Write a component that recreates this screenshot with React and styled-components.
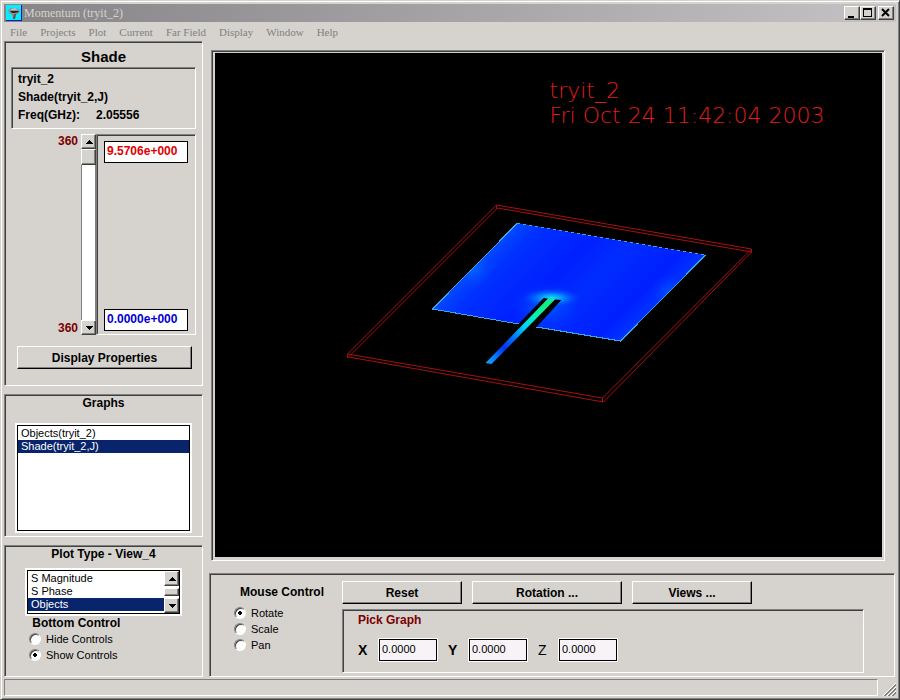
import { useState } from 'react';
import styled, { createGlobalStyle, css } from 'styled-components';

const GlobalStyle = createGlobalStyle`
  * {
    box-sizing: border-box;
  }

  body {
    margin: 0;
    background: #d6d3ce;
    color: #000;
    font: 12px/16px 'Liberation Sans', Arial, sans-serif;
  }

  button, input, select {
    font: inherit;
    color: inherit;
    margin: 0;
    border-radius: 0;
    outline: none;
  }
`;

const sunken = css`
  border: 1px solid;
  border-color: #808080 #fff #fff #808080;
  box-shadow: inset 1px 1px 0 #404040;
`;

const raised = css`
  border: 1px solid;
  border-color: #fff #404040 #404040 #fff;
  box-shadow: inset -1px -1px 0 #808080;
  background: #d6d3ce;
`;

const Window = styled.div`
  min-height: 100vh;
  display: flex;
  flex-direction: column;
  padding: 3px;
  border: 1px solid;
  border-color: #d6d3ce #404040 #404040 #d6d3ce;
  box-shadow: inset 1px 1px 0 #fff, inset -1px -1px 0 #808080;
`;

const TitleBar = styled.header`
  display: flex;
  align-items: center;
  height: 18px;
  padding: 0 2px;
  background: linear-gradient(90deg, #868486, #c4c2c4);
  color: #d6d3ce;
  font: 12px/16px 'Liberation Serif', 'Times New Roman', serif;
`;

const Title = styled.h1`
  flex: 1;
  margin: 0 0 0 2px;
  font: inherit;
`;

const WindowButtons = styled.div`
  display: flex;
`;

const WindowButton = styled.button`
  ${raised}
  width: 16px;
  height: 14px;
  padding: 0;
  display: flex;
  color: #000;

  &:last-child {
    margin-left: 2px;
  }
`;

const Menu = styled.nav`
  display: flex;
  gap: 11px;
  height: 19px;
  padding: 0 5px;
`;

const MenuButton = styled.button`
  border: 0;
  padding: 0 1px;
  background: none;
  color: #808080;
  font: 11px/20px 'Liberation Serif', 'Times New Roman', serif;
`;

const Workspace = styled.main`
  flex: 1;
  display: flex;
  gap: 6px;
`;

const Sidebar = styled.div`
  width: 199px;
  display: flex;
  flex-direction: column;
  gap: 8px;
`;

const Panel = styled.section`
  ${sunken}
  flex: ${(props) => (props.$grow ? 1 : 'none')};
  display: flex;
  flex-direction: column;
`;

const Heading = styled.h2`
  margin: 0;
  text-align: ${(props) => (props.$left ? 'left' : 'center')};
  font-size: ${(props) => (props.$large ? 15 : 12)}px;
  font-weight: 700;
  line-height: 16px;
  color: ${(props) => props.$color || '#000'};
`;

const ShadePanel = styled(Panel)`
  padding: 7px 6px 16px;
`;

const Info = styled.div`
  ${sunken}
  margin-top: 2px;
  padding: 2px 6px 4px;
  font-weight: 700;
  line-height: 18px;
`;

const Frequency = styled.div`
  display: flex;
  gap: 16px;
`;

const Scale = styled.div`
  display: flex;
  height: 201px;
  margin-top: 5px;
`;

const ScaleLabels = styled.div`
  width: 70px;
  padding-right: 3px;
  display: flex;
  flex-direction: column;
  justify-content: space-between;
  text-align: right;
  font-weight: 700;
  line-height: 14px;
  color: #7b0000;
`;

const ScrollBar = styled.div`
  width: 15px;
  display: flex;
  flex-direction: column;
  background: #fff;
`;

const ArrowButton = styled.button`
  ${raised}
  height: 15px;
  padding: 0;
  display: flex;
  align-items: center;
  justify-content: center;
`;

const Slider = styled.input`
  appearance: none;
  writing-mode: vertical-lr;
  flex: 1;
  width: 15px;
  min-height: 0;
  background: #fff;
  border: 1px solid #808080;
  border-width: 0 1px;

  &::-webkit-slider-thumb {
    appearance: none;
    ${raised}
    width: 15px;
    height: 16px;
  }
`;

const ScaleFrame = styled.div`
  ${sunken}
  flex: 1;
  padding: 6px 7px 3px;
  display: flex;
  flex-direction: column;
  justify-content: space-between;
`;

const ScaleValue = styled.input`
  width: 100%;
  height: 22px;
  padding: 0 2px 3px;
  border: 1px solid #000;
  background: #fff;
  font-weight: 700;
  color: ${(props) => props.$color};
`;

const PushButton = styled.button`
  border: 1px solid;
  border-color: #fff #000 #000 #fff;
  box-shadow: inset -1px -1px 0 #808080;
  background: #d6d3ce;
  height: 23px;
  padding: 0;
  font-weight: 700;
  width: ${(props) => (props.$width ? props.$width + 'px' : 'auto')};
`;

const PropertiesButton = styled(PushButton)`
  margin: 11px 4px 0 6px;
`;

const ListFrame = styled.div`
  display: flex;
  border: 1px solid #000;
  outline: 2px solid #fff;
  background: #fff;
`;

const List = styled.select`
  flex: 1;
  min-width: 0;
  height: 100%;
  padding: 1px 0 0;
  border: 0;
  background: #fff;
  overflow: hidden;

  option {
    min-height: 13px;
    padding: 0 3px;
    font-size: 11px;
    line-height: 13px;
  }

  option:checked {
    background-image: linear-gradient(#08246b, #08246b);
    -webkit-text-fill-color: #fff;
  }
`;

const GraphsFrame = styled(ListFrame)`
  flex: 1;
  margin: 14px 12px 5px;
`;

const TypesFrame = styled(ListFrame)`
  height: 44px;
  margin: 8px 22px 0;
`;

const TypesScroll = styled(ScrollBar)`
  justify-content: space-between;
`;

const Thumb = styled.div`
  ${raised}
  height: 8px;
`;

const PlotTypePanel = styled(Panel)`
  height: 132px;
`;

const BottomControl = styled.div`
  padding: 1px 24px;
`;

const Radio = styled.label`
  display: flex;
  align-items: center;
  gap: 5px;
  height: 16px;
  font-size: 11px;
`;

const RadioInput = styled.input`
  appearance: none;
  width: 12px;
  height: 12px;
  border: 1px solid;
  border-color: #808080 #fff #fff #808080;
  border-radius: 50%;
  box-shadow: inset 1px 1px 0 #404040;
  background: #fff;

  &:checked {
    background: radial-gradient(circle, #000 2px, #fff 2px);
  }
`;

const Content = styled.div`
  flex: 1;
  min-width: 0;
  display: flex;
  flex-direction: column;
  gap: 12px;
`;

const Viewport = styled.section`
  ${sunken}
  flex: 1;
  display: flex;
  margin: 9px 11px 0 2px;
  padding: 2px 2px 2px 3px;
`;

const Plot = styled.svg`
  flex: 1;
  min-width: 0;
  height: 504px;
  background: #000;
`;

const PlotText = styled.text`
  font: 200 22px 'DejaVu Sans', sans-serif;
  fill: #e01c1c;
`;

const Controls = styled.section`
  ${sunken}
  display: flex;
  margin-right: 1px;
  padding: 7px 30px 3px 24px;
`;

const MouseControl = styled.div`
  width: 108px;
  padding-top: 3px;
`;

const MouseHeading = styled(Heading)`
  padding: 0 0 5px 6px;
`;

const Actions = styled.div`
  flex: 1;
`;

const ButtonRow = styled.div`
  display: flex;
  gap: 10px;
`;

const PickGraph = styled.div`
  ${sunken}
  margin-top: 5px;
  padding: 2px 15px 11px;
`;

const Coordinates = styled.div`
  display: flex;
  gap: 11px;
  margin-top: 11px;
`;

const Coordinate = styled.label`
  display: flex;
  align-items: center;
  font-size: 14px;
`;

const Axis = styled.span`
  width: 21px;
  font-weight: ${(props) => (props.$light ? 400 : 700)};
`;

const CoordinateInput = styled.input`
  width: 58px;
  height: 22px;
  padding: 0 2px 3px;
  border: 1px solid #000;
  outline: 1px solid #fff;
  background: #f7f3f7;
  font-size: 11px;
`;

const StatusBar = styled.footer`
  display: flex;
  align-items: end;
  gap: 5px;
  margin-top: 2px;
`;

const Status = styled.div`
  flex: 1;
  height: 17px;
  border: 1px solid;
  border-color: #808080 #fff #fff #808080;
`;

const Arrow = ({ down }) => (
  <svg width="8" height="4" viewBox="0 0 8 4" shapeRendering="crispEdges">
    <path d={down ? 'M0 0h8L4 4z' : 'M0 4h8L4 0z'} />
  </svg>
);

const AppIcon = () => (
  <svg width="16" height="16" viewBox="0 0 16 16">
    <rect width="16" height="16" fill="#0018c8" />
    <rect width="15" height="15" fill="#00f0ff" />
    <path d="M2 5 5 3h5l4 2-1 3-3 2-1 4H7l-1-4-3-2z" fill="#8c9494" />
    <path d="M4 6h8l1 1-4 1H6z" fill="#202828" />
    <path d="m5 4 4-1 3 2H5z" fill="#b8c4c4" />
    <path d="m8 9 2 0-1 5H7z" fill="#505858" />
  </svg>
);

const Grip = () => (
  <svg width="13" height="13" viewBox="0 0 13 13">
    <path d="M0 13 13 0M4 13l9-9M8 13l5-5" stroke="#fff" />
    <path d="M1 13 13 1M2 13 13 2M5 13l8-8M6 13l7-7M9 13l4-4M10 13l3-3" stroke="#808080" />
  </svg>
);

const CurrentPlot = () => (
  <Plot viewBox="215 53 666 504" role="img" aria-label="Current density on the patch">
    <defs>
      <linearGradient id="patch" gradientUnits="userSpaceOnUse" x1="475" y1="266" x2="585" y2="376">
        <stop offset="0" stopColor="#0048ff" />
        <stop offset="0.12" stopColor="#0030ff" />
        <stop offset="0.4" stopColor="#0020ff" />
        <stop offset="0.6" stopColor="#002cff" />
        <stop offset="0.88" stopColor="#0020ff" />
        <stop offset="1" stopColor="#0034ff" />
      </linearGradient>
      <linearGradient id="feed" gradientUnits="userSpaceOnUse" x1="488" y1="363" x2="552" y2="298">
        <stop offset="0" stopColor="#10a0ff" />
        <stop offset="0.12" stopColor="#0070ff" />
        <stop offset="0.24" stopColor="#0034f4" />
        <stop offset="0.4" stopColor="#0078ff" />
        <stop offset="0.56" stopColor="#00d4f8" />
        <stop offset="0.72" stopColor="#08f0b8" />
        <stop offset="0.9" stopColor="#10f080" />
        <stop offset="1" stopColor="#10e8b8" />
      </linearGradient>
      <radialGradient id="glow">
        <stop offset="0" stopColor="#18e8e0" />
        <stop offset="0.35" stopColor="#08a8ff" stopOpacity="0.85" />
        <stop offset="1" stopColor="#0040ff" stopOpacity="0" />
      </radialGradient>
      <radialGradient id="haze">
        <stop offset="0" stopColor="#0078ff" stopOpacity="0.7" />
        <stop offset="1" stopColor="#0040ff" stopOpacity="0" />
      </radialGradient>
      <clipPath id="patchShape">
        <path d="M517 223 705 255 620 341 536 327 561 300 543 298 518 324 432 309z" />
      </clipPath>
    </defs>

    <g fill="none" stroke="#a81010">
      <path d="M496 205 751 249 602 398 347 354z" />
      <path d="M497 208 751 252 603 402 348 357z" />
      <path d="M496 205v4M751 249v4M602 398v4M347 354v4" />
    </g>

    <g clipPath="url(#patchShape)">
      <path d="M517 223 705 255 620 341 432 309z" fill="url(#patch)" />
      <ellipse cx="472" cy="268" rx="22" ry="22" fill="url(#haze)" />
      <ellipse cx="668" cy="292" rx="18" ry="18" fill="url(#haze)" opacity="0.6" />
      <ellipse cx="545" cy="306" rx="36" ry="24" fill="url(#haze)" />
      <ellipse cx="551" cy="298" rx="30" ry="10" fill="url(#glow)" />
    </g>
    <g fill="none" stroke="#38a8e0" shapeRendering="crispEdges">
      <path d="M517 223 705 255" strokeDasharray="3 3" />
      <path d="M705 255 620 341 536 327M518 324 432 309 517 223" />
    </g>
    <path d="M548 298 555 299 491 364 485 363z" fill="url(#feed)" />

    <PlotText x="549" y="98">tryit_2</PlotText>
    <PlotText x="549" y="123">Fri Oct 24 11:42:04 2003</PlotText>
  </Plot>
);

const menus = ['File', 'Projects', 'Plot', 'Current', 'Far Field', 'Display', 'Window', 'Help'];
const graphs = ['Objects(tryit_2)', 'Shade(tryit_2,J)'];
const plotTypes = ['S Magnitude', 'S Phase', 'Objects'];

const RadioGroup = ({ name, options, initial }) => {
  const [value, setValue] = useState(initial);

  return options.map((option) => (
    <Radio key={option}>
      <RadioInput
        type="radio"
        name={name}
        checked={value === option}
        onChange={() => setValue(option)}
      />
      {option}
    </Radio>
  ));
};

const App = () => {
  return (
    <Window>
      <GlobalStyle />
      <TitleBar>
        <AppIcon />
        <Title>Momentum (tryit_2)</Title>
        <WindowButtons>
          <WindowButton aria-label="Minimize">
            <svg width="14" height="12"><path d="M3 9h6v2H3z" /></svg>
          </WindowButton>
          <WindowButton aria-label="Maximize">
            <svg width="14" height="12" fillRule="evenodd"><path d="M2 1h9v9H2zM3 3h7v6H3z" /></svg>
          </WindowButton>
          <WindowButton aria-label="Close">
            <svg width="14" height="12"><path d="m3 2 7 7m0-7-7 7" stroke="#000" strokeWidth="2" /></svg>
          </WindowButton>
        </WindowButtons>
      </TitleBar>

      <Menu>
        {menus.map((menu) => (
          <MenuButton key={menu}>{menu}</MenuButton>
        ))}
      </Menu>

      <Workspace>
        <Sidebar>
          <ShadePanel>
            <Heading $large>Shade</Heading>
            <Info>
              <div>tryit_2</div>
              <div>Shade(tryit_2,J)</div>
              <Frequency>
                <span>Freq(GHz):</span>
                <span>2.05556</span>
              </Frequency>
            </Info>
            <Scale>
              <ScaleLabels>
                <span>360</span>
                <span>360</span>
              </ScaleLabels>
              <ScrollBar>
                <ArrowButton aria-label="Increase"><Arrow /></ArrowButton>
                <Slider type="range" min="0" max="360" defaultValue="0" aria-label="Phase" />
                <ArrowButton aria-label="Decrease"><Arrow down /></ArrowButton>
              </ScrollBar>
              <ScaleFrame>
                <ScaleValue $color="#e00000" defaultValue="9.5706e+000" aria-label="Maximum" />
                <ScaleValue $color="#0000d0" defaultValue="0.0000e+000" aria-label="Minimum" />
              </ScaleFrame>
            </Scale>
            <PropertiesButton>Display Properties</PropertiesButton>
          </ShadePanel>

          <Panel $grow>
            <Heading as="label" htmlFor="graphs">Graphs</Heading>
            <GraphsFrame>
              <List id="graphs" size="7" defaultValue={graphs[1]}>
                {graphs.map((graph) => (
                  <option key={graph}>{graph}</option>
                ))}
              </List>
            </GraphsFrame>
          </Panel>

          <PlotTypePanel>
            <Heading as="label" htmlFor="plot-type">Plot Type - View_4</Heading>
            <TypesFrame>
              <List id="plot-type" size="3" defaultValue="Objects">
                {plotTypes.map((type) => (
                  <option key={type}>{type}</option>
                ))}
              </List>
              <TypesScroll>
                <ArrowButton aria-label="Scroll up"><Arrow /></ArrowButton>
                <Thumb />
                <ArrowButton aria-label="Scroll down"><Arrow down /></ArrowButton>
              </TypesScroll>
            </TypesFrame>
            <BottomControl>
              <Heading $left>&nbsp;Bottom Control</Heading>
              <RadioGroup
                name="bottom"
                options={['Hide Controls', 'Show Controls']}
                initial="Show Controls"
              />
            </BottomControl>
          </PlotTypePanel>
        </Sidebar>

        <Content>
          <Viewport>
            <CurrentPlot />
          </Viewport>

          <Controls>
            <MouseControl>
              <MouseHeading $left>Mouse Control</MouseHeading>
              <RadioGroup name="mouse" options={['Rotate', 'Scale', 'Pan']} initial="Rotate" />
            </MouseControl>
            <Actions>
              <ButtonRow>
                <PushButton $width={120}>Reset</PushButton>
                <PushButton $width={150}>Rotation ...</PushButton>
                <PushButton $width={120}>Views ...</PushButton>
              </ButtonRow>
              <PickGraph>
                <Heading $left $color="#7b0000">Pick Graph</Heading>
                <Coordinates>
                  {['X', 'Y', 'Z'].map((axis) => (
                    <Coordinate key={axis}>
                      <Axis $light={axis === 'Z'}>{axis}</Axis>
                      <CoordinateInput defaultValue="0.0000" />
                    </Coordinate>
                  ))}
                </Coordinates>
              </PickGraph>
            </Actions>
          </Controls>
        </Content>
      </Workspace>

      <StatusBar>
        <Status />
        <Grip />
      </StatusBar>
    </Window>
  );
};

export default App;
